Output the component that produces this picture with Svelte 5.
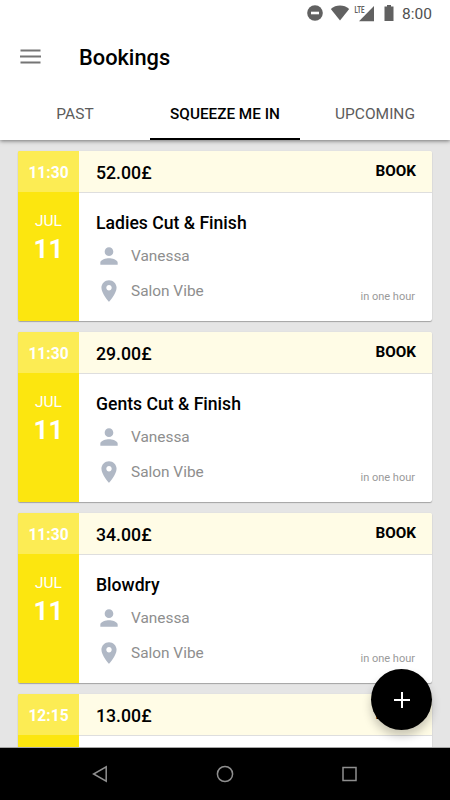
<script>
  // --- DATA ---
  const tabs = ['PAST', 'SQUEEZE ME IN', 'UPCOMING'];
  let activeTab = 1;

  const bookings = [
    { time: '11:30', month: 'JUL', day: '11', price: '52.00£', title: 'Ladies Cut & Finish', stylist: 'Vanessa', salon: 'Salon Vibe', when: 'in one hour' },
    { time: '11:30', month: 'JUL', day: '11', price: '29.00£', title: 'Gents Cut & Finish', stylist: 'Vanessa', salon: 'Salon Vibe', when: 'in one hour' },
    { time: '11:30', month: 'JUL', day: '11', price: '34.00£', title: 'Blowdry', stylist: 'Vanessa', salon: 'Salon Vibe', when: 'in one hour' },
    { time: '12:15', price: '13.00£' }
  ];
</script>

<div class="screen">
  <header>
    <div class="status">
      <svg class="dnd" width="16" height="16" viewBox="0 0 16 16">
        <circle cx="8" cy="8" r="7.8" fill="#616161" />
        <rect x="4" y="6.7" width="8" height="2.6" fill="#fff" />
      </svg>
      <svg class="wifi" width="20" height="16" viewBox="0 0 20 16">
        <path d="M0.8 4C6 -0.6 14 -0.6 19.2 4L10 15.500z" fill="#616161" />
      </svg>
      <svg class="signal" width="21" height="17" viewBox="0 0 21 17">
        <path d="M20 1v15.300H5z" fill="#616161" />
        <path d="M0 0h11.500v9H0z" fill="#fff" />
        <text x="0.500" y="8" textLength="10" lengthAdjust="spacingAndGlyphs">LTE</text>
      </svg>
      <svg class="battery" width="10" height="16" viewBox="0 0 10 16">
        <path d="M3 0h4v1.600h2.500V16h-9V1.600H3z" fill="#616161" />
      </svg>
      <span class="clock">8:00</span>
    </div>

    <div class="toolbar">
      <button class="menu" aria-label="Menu">
        <svg width="21" height="15" viewBox="0 0 21 15">
          <path d="M0.500 1.500h20M0 7.500h21M0.500 13.500h20" stroke="#757575" stroke-width="1.800" />
        </svg>
      </button>
      <h1>Bookings</h1>
    </div>

    <nav class="tabs">
      {#each tabs as tab, i}
        <button class="tab" class:active={i === activeTab} on:click={() => (activeTab = i)}>{tab}</button>
      {/each}
    </nav>
  </header>

  <main>
    {#each bookings as b}
      <article class="card">
        <div class="date">
          <div class="time">{b.time}</div>
          {#if b.month}
            <div class="month">{b.month}</div>
            <div class="day">{b.day}</div>
          {/if}
        </div>
        <div class="details">
          <div class="price-row">
            <span class="price">{b.price}</span>
            <button class="book">BOOK</button>
          </div>
          {#if b.title}
            <div class="body">
              <h2>{b.title}</h2>
              <div class="line">
                <svg width="26" height="26" viewBox="0 0 24 24">
                  <path d="M12 12c2.210 0 4-1.790 4-4s-1.790-4-4-4-4 1.790-4 4 1.790 4 4 4zm0 2c-2.670 0-8 1.340-8 4v2h16v-2c0-2.660-5.330-4-8-4z" fill="#b0b8c5" />
                </svg>
                <span>{b.stylist}</span>
              </div>
              <div class="line">
                <svg width="26" height="26" viewBox="0 0 24 24">
                  <path d="M12 2C8.130 2 5 5.130 5 9c0 5.250 7 13 7 13s7-7.750 7-13c0-3.870-3.130-7-7-7zm0 9.500c-1.380 0-2.500-1.120-2.500-2.500s1.120-2.500 2.500-2.500 2.500 1.120 2.500 2.500-1.120 2.500-2.500 2.500z" fill="#b0b8c5" />
                </svg>
                <span>{b.salon}</span>
                <small>{b.when}</small>
              </div>
            </div>
          {/if}
        </div>
      </article>
    {/each}

    <button class="fab" aria-label="Add booking">
      <svg width="16" height="16" viewBox="0 0 16 16">
        <path d="M8 0v16M0 8h16" stroke="#fff" stroke-width="2" />
      </svg>
    </button>
  </main>

  <footer>
    <svg width="16" height="18" viewBox="0 0 16 18">
      <path d="M14.200 1.800v14.400L1.600 9z" />
    </svg>
    <svg width="18" height="18" viewBox="0 0 18 18">
      <circle cx="9" cy="9" r="7.600" />
    </svg>
    <svg width="16" height="16" viewBox="0 0 16 16">
      <rect x="1" y="1.500" width="13" height="13" />
    </svg>
  </footer>
</div>

<style>
  :global(body) { background: #e5e5e5; }

  .screen {
    width: 450px; height: 800px;
    display: flex; flex-direction: column;
    overflow: hidden;
    background: #e5e5e5;
    font-family: Roboto, sans-serif;
    color: #000;
  }

  button {
    background: none; border: none; padding: 0; margin: 0;
    font-family: inherit; color: inherit;
    cursor: pointer;
  }

  svg { display: block; flex: none; }

  /* --- HEADER --- */
  header {
    height: 140px; flex: none;
    background: #fff;
    box-shadow: 0 1px 4px rgba(0, 0, 0, 0.5);
    z-index: 1;
  }

  .status {
    height: 28px;
    display: flex; align-items: center; justify-content: flex-end;
    padding-right: 18px; box-sizing: border-box;
  }
  .status svg { margin-bottom: 2px; }
  .wifi { margin-left: 7px; }
  .signal { margin-left: 4px; }
  .battery { margin-left: 9px; }
  .signal text { font-size: 9.500px; font-weight: 700; fill: #616161; }
  .clock { margin-left: 8px; font-size: 15.500px; line-height: 28px; font-weight: 400; color: #505050; }

  .toolbar {
    height: 60px;
    display: flex; align-items: center;
    padding-left: 20px;
  }
  .menu svg { margin-bottom: 3px; }
  h1 { margin: 0 0 0 38px; font-size: 21.800px; line-height: 28px; font-weight: 500; }

  .tabs { height: 52px; display: flex; }
  .tab {
    flex: 1;
    padding-top: 1px;
    font-size: 15.500px; color: #5c5c5c; font-weight: 400;
    border-bottom: 2px solid transparent;
  }
  .tab.active { color: #000; border-bottom-color: #000; font-size: 15.300px; font-weight: 500; }

  /* --- LIST --- */
  main {
    flex: 1; min-height: 0;
    display: flex; flex-direction: column; gap: 11px;
    padding: 11px 18px 0;
    overflow: hidden;
    position: relative;
  }

  .card {
    height: 170px; flex: none;
    display: flex;
    background: #fff;
    border-radius: 2px;
    box-shadow: 0 1px 1px rgba(0, 0, 0, 0.28), 0 0 1px rgba(0, 0, 0, 0.15);
  }

  .date {
    width: 61px;
    background: #fce60f;
    border-radius: 2px 0 0 2px;
    color: #fff; text-align: center;
    overflow: hidden;
  }
  .time { height: 41px; line-height: 44px; background: #fcec54; font-size: 15.600px; font-weight: 700; }
  .month { margin-top: 18px; font-size: 15.500px; line-height: 22px; }
  .day { font-size: 26px; line-height: 34px; font-weight: 700; }

  .details { flex: 1; }
  .price-row {
    height: 42px; box-sizing: border-box;
    display: flex; justify-content: space-between;
    padding: 0 16px 0 17px;
    background: #fffce6;
    border-bottom: 1px solid #dedede;
    border-radius: 0 2px 0 0;
  }
  .price { font-size: 17.700px; line-height: 44px; font-weight: 500; }
  .book { height: 40px; font-size: 15.300px; font-weight: 700; }

  .body { padding: 18px 17px 0 17px; }
  h2 { margin: 0 0 8px; font-size: 17.600px; line-height: 24px; font-weight: 500; }
  .line { height: 26px; margin-bottom: 9px; display: flex; align-items: center; font-size: 15.400px; color: #8e8e8e; }
  .line span { margin-left: 9px; }
  small { margin: 11px 0 0 auto; font-size: 11px; color: #9a9a9a; }

  /* --- FLOATING BUTTON --- */
  .fab {
    position: absolute; right: 18px; bottom: 17px;
    width: 61px; height: 61px;
    display: flex; align-items: center; justify-content: center;
    background: #000;
    border-radius: 50%;
    box-shadow: 0 6px 10px rgba(0, 0, 0, 0.22);
  }

  /* --- SYSTEM BAR --- */
  footer {
    height: 53px; box-sizing: border-box; flex: none;
    display: flex; align-items: center; justify-content: center; gap: 108px;
    background: #000;
    border-top: 1px solid #a5a5a5;
  }
  footer svg { fill: none; stroke: #8f8f8f; stroke-width: 1.5; }
</style>
